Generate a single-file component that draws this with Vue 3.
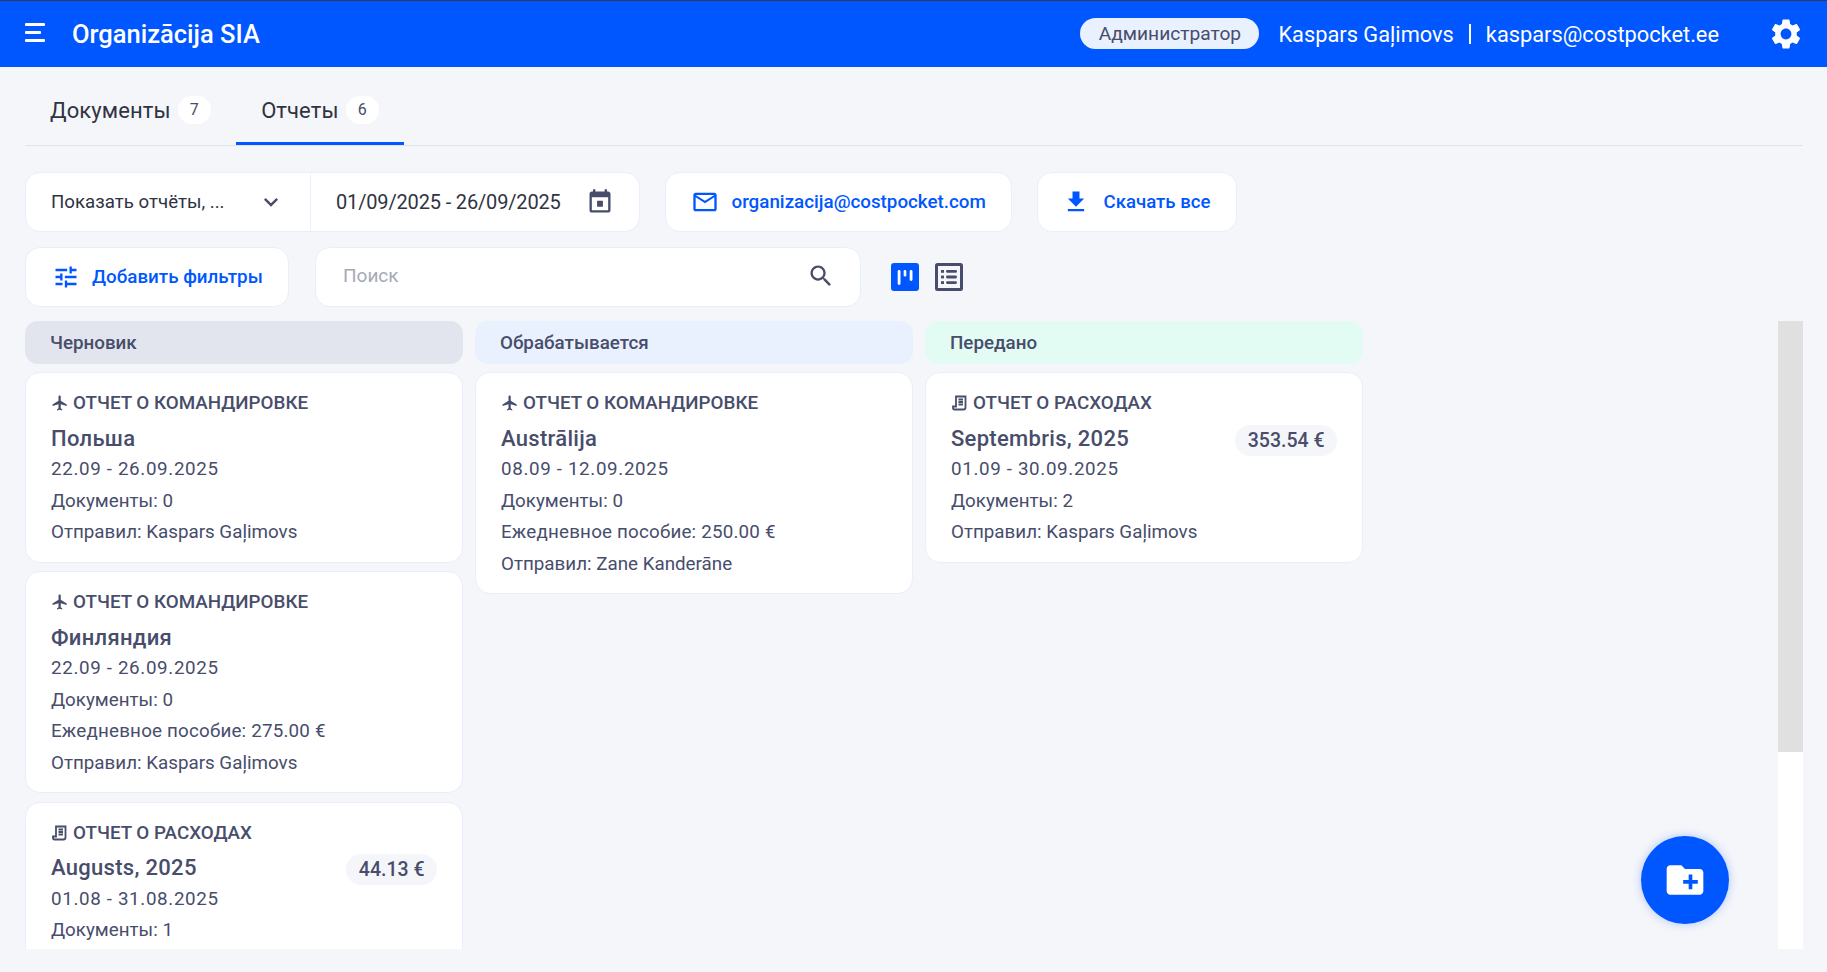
<script setup>
import { ref } from 'vue'

const activeTab = ref('reports')

const tabs = [
  { id: 'docs', label: 'Документы', count: 7 },
  { id: 'reports', label: 'Отчеты', count: 6 }
]

const icons = {
  gear: 'M19.14 12.94c.04-.3.06-.61.06-.94 0-.32-.02-.64-.07-.94l2.03-1.58c.18-.14.23-.41.12-.61l-1.92-3.32c-.12-.22-.37-.29-.59-.22l-2.39.96c-.5-.38-1.03-.7-1.62-.94l-.36-2.54c-.04-.24-.24-.41-.48-.41h-3.84c-.24 0-.43.17-.47.41l-.36 2.54c-.59.24-1.13.57-1.62.94l-2.39-.96c-.22-.08-.47 0-.59.22L2.74 8.87c-.12.21-.08.47.12.61l2.03 1.58c-.05.3-.09.63-.09.94s.02.64.07.94l-2.03 1.58c-.18.14-.23.41-.12.61l1.92 3.32c.12.22.37.29.59.22l2.39-.96c.5.38 1.03.7 1.62.94l.36 2.54c.05.24.24.41.48.41h3.84c.24 0 .44-.17.47-.41l.36-2.54c.59-.24 1.13-.56 1.62-.94l2.39.96c.22.08.47 0 .59-.22l1.92-3.32c.12-.22.07-.47-.12-.61l-2.01-1.58zM12 15.6c-1.98 0-3.6-1.62-3.6-3.6s1.62-3.6 3.6-3.6 3.6 1.62 3.6 3.6-1.62 3.6-3.6 3.6z',
  calendar: 'M19 3h-1V1h-2v2H8V1H6v2H5c-1.11 0-1.99.9-1.99 2L3 19c0 1.1.89 2 2 2h14c1.1 0 2-.9 2-2V5c0-1.1-.9-2-2-2zm0 16H5V8h14v11zM9.5 11h5v5h-5z',
  mail: 'M20 4H4c-1.1 0-1.99.9-1.99 2L2 18c0 1.1.9 2 2 2h16c1.1 0 2-.9 2-2V6c0-1.1-.9-2-2-2zm0 14H4V8l8 5 8-5v10zm-8-7L4 6h16l-8 5z',
  download: 'M19 9h-4V3H9v6H5l7 7 7-7zM5 18v2h14v-2H5z',
  tune: 'M3 17v2h6v-2H3zM3 5v2h10V5H3zm10 16v-2h8v-2h-8v-2h-2v6h2zM7 9v2H3v2h4v2h2V9H7zm14 4v-2H11v2h10zm-6-4h2V7h4V5h-4V3h-2v6z',
  search: 'M15.5 14h-.79l-.28-.27C15.41 12.59 16 11.11 16 9.5 16 5.91 13.09 3 9.5 3S3 5.91 3 9.5 5.91 16 9.5 16c1.61 0 3.09-.59 4.23-1.57l.27.28v.79l5 4.99L20.49 19l-4.99-5zm-6 0C7.01 14 5 11.99 5 9.5S7.01 5 9.5 5 14 7.01 14 9.5 11.99 14 9.5 14z',
  plane: 'M21 16v-2l-8-5V3.5c0-.83-.67-1.5-1.5-1.5S10 2.67 10 3.5V9l-8 5v2l8-2.5V19l-2 1.5V22l3.5-1 3.5 1v-1.5L13 19v-5.5l8 2.5z',
  folder: 'M20 6h-8l-2-2H4c-1.11 0-1.99.89-1.99 2L2 18c0 1.11.89 2 2 2h16c1.11 0 2-.89 2-2V8c0-1.11-.89-2-2-2zm-1 8h-3v3h-2v-3h-3v-2h3V9h2v3h3v2z',
  chevron: 'M7.41 8.59 12 13.17l4.59-4.58L18 10l-6 6-6-6z'
}

const TRIP = 'ОТЧЕТ О КОМАНДИРОВКЕ'
const EXPENSE = 'ОТЧЕТ О РАСХОДАХ'

const columns = [
  {
    id: 'draft',
    title: 'Черновик',
    cards: [
      { type: 'trip', label: TRIP, title: 'Польша', dates: '22.09 - 26.09.2025', lines: ['Документы: 0', 'Отправил: Kaspars Gaļimovs'] },
      { type: 'trip', label: TRIP, title: 'Финляндия', dates: '22.09 - 26.09.2025', lines: ['Документы: 0', 'Ежедневное пособие: 275.00 €', 'Отправил: Kaspars Gaļimovs'] },
      { type: 'expense', label: EXPENSE, title: 'Augusts, 2025', sum: '44.13 €', dates: '01.08 - 31.08.2025', lines: ['Документы: 1', 'Отправил: Kaspars Gaļimovs'] }
    ]
  },
  {
    id: 'processing',
    title: 'Обрабатывается',
    cards: [
      { type: 'trip', label: TRIP, title: 'Austrālija', dates: '08.09 - 12.09.2025', lines: ['Документы: 0', 'Ежедневное пособие: 250.00 €', 'Отправил: Zane Kanderāne'] }
    ]
  },
  {
    id: 'sent',
    title: 'Передано',
    cards: [
      { type: 'expense', label: EXPENSE, title: 'Septembris, 2025', sum: '353.54 €', dates: '01.09 - 30.09.2025', lines: ['Документы: 2', 'Отправил: Kaspars Gaļimovs'] }
    ]
  }
]
</script>

<template>
  <div class="page">
    <header class="topbar">
      <button class="burger" aria-label="Меню">
        <svg width="20" height="19" viewBox="0 0 20 19">
          <rect x="0" y="0" width="20" height="3" rx="1" />
          <rect x="0" y="8" width="16" height="3" rx="1" />
          <rect x="0" y="16" width="20" height="3" rx="1" />
        </svg>
      </button>
      <div class="org">Organizācija SIA</div>
      <span class="role">Администратор</span>
      <span class="user">Kaspars Gaļimovs</span>
      <span class="sep"></span>
      <span class="user">kaspars@costpocket.ee</span>
      <svg class="gear" width="36" height="36" viewBox="0 0 24 24"><path :d="icons.gear" /></svg>
    </header>

    <main class="content">
      <nav class="tabs">
        <div
          v-for="tab in tabs"
          :key="tab.id"
          class="tab"
          :class="{ active: activeTab === tab.id }"
          @click="activeTab = tab.id"
        >
          <span>{{ tab.label }}</span>
          <span class="count">{{ tab.count }}</span>
        </div>
      </nav>

      <div class="toolbar">
        <div class="box range">
          <div class="select">
            <span>Показать отчёты, ...</span>
            <svg width="28" height="28" viewBox="0 0 24 24"><path :d="icons.chevron" /></svg>
          </div>
          <div class="dates">
            <span>01/09/2025 - 26/09/2025</span>
            <svg width="28" height="28" viewBox="0 0 24 24"><path :d="icons.calendar" /></svg>
          </div>
        </div>
        <a class="box link mail">
          <svg width="28" height="28" viewBox="0 0 24 24"><path :d="icons.mail" /></svg>
          <span>organizacija@costpocket.com</span>
        </a>
        <a class="box link down">
          <svg width="28" height="28" viewBox="0 0 24 24"><path :d="icons.download" /></svg>
          <span>Скачать все</span>
        </a>
      </div>

      <div class="toolbar second">
        <a class="box link filters">
          <svg width="28" height="28" viewBox="0 0 24 24"><path :d="icons.tune" /></svg>
          <span>Добавить фильтры</span>
        </a>
        <div class="box search">
          <span class="placeholder">Поиск</span>
          <svg width="28" height="28" viewBox="0 0 24 24"><path :d="icons.search" /></svg>
        </div>
        <div class="views">
          <svg class="view" viewBox="0 0 28 28">
            <rect width="28" height="28" rx="3" fill="#0057ff" />
            <rect x="6.7" y="7" width="2.8" height="15" rx="1.4" fill="#fff" />
            <rect x="12.7" y="7" width="2.6" height="6.5" rx="1.3" fill="#fff" />
            <rect x="18.7" y="7" width="2.8" height="11" rx="1.4" fill="#fff" />
          </svg>
          <svg class="view" viewBox="0 0 28 28">
            <rect x="1.5" y="1.5" width="25" height="25" rx="1" fill="none" stroke="#474d6b" stroke-width="3" />
            <rect x="6" y="7" width="3" height="2.8" fill="#474d6b" />
            <rect x="11" y="7" width="11" height="2.8" rx="1.4" fill="#474d6b" />
            <rect x="6" y="12.6" width="3" height="2.8" fill="#474d6b" />
            <rect x="11" y="12.6" width="11" height="2.8" rx="1.4" fill="#474d6b" />
            <rect x="6" y="18.2" width="3" height="2.8" fill="#474d6b" />
            <rect x="11" y="18.2" width="11" height="2.8" rx="1.4" fill="#474d6b" />
          </svg>
        </div>
      </div>

      <section class="board">
        <div class="columns">
          <div v-for="col in columns" :key="col.id" class="column">
            <div class="col-head" :class="col.id">{{ col.title }}</div>
            <article v-for="card in col.cards" :key="card.title" class="card">
              <div class="card-type">
                <svg v-if="card.type === 'trip'" width="18" height="18" viewBox="0 0 24 24">
                  <path :d="icons.plane" />
                </svg>
                <svg v-else class="receipt" width="18" height="18" viewBox="0 0 18 18">
                  <path d="M5 2.5h9.5v11c0 1.2-.8 2-2 2H3.5c-1 0-1.5-.7-1.5-1.6V12.5h3z" />
                  <path d="M7.5 5.5h4.5M7.5 8h4.5M7.5 10.5h4.5" />
                </svg>
                <span>{{ card.label }}</span>
              </div>
              <div class="card-title">
                <span>{{ card.title }}</span>
                <span v-if="card.sum" class="sum">{{ card.sum }}</span>
              </div>
              <div class="card-line card-dates">{{ card.dates }}</div>
              <div
                v-for="line in card.lines"
                :key="line"
                class="card-line"
                :class="{ money: line.includes('€') }"
              >{{ line }}</div>
            </article>
          </div>
        </div>
        <div class="scroll-track"><div class="scroll-thumb"></div></div>
      </section>
    </main>

    <button class="fab" aria-label="Новый отчет">
      <svg width="44" height="44" viewBox="0 0 24 24"><path :d="icons.folder" /></svg>
    </button>
  </div>
</template>

<style scoped>
.page {
  height: 972px;
  overflow: hidden;
  position: relative;
  background: #f5f6fa;
  color: #474d6b;
  font-family: Roboto, "Liberation Sans", sans-serif;
}

.topbar {
  height: 66px;
  border-top: 1px solid #2f3a55;
  background: #0057ff;
  color: #fff;
  display: flex;
  align-items: center;
  padding: 0 23px 0 25px;
}

.burger {
  background: none;
  border: none;
  padding: 0;
  width: 47px;
  margin-top: -3px;
  display: flex;
  fill: #fff;
}

.org {
  font-size: 25.5px;
  font-weight: 500;
  margin-right: auto;
}

.role {
  background: #e9f0fe;
  color: #474d6b;
  font-size: 19.2px;
  height: 31px;
  width: 179px;
  display: flex;
  align-items: center;
  justify-content: center;
  border-radius: 16px;
  margin-right: 19px;
  margin-top: -1px;
}

.user {
  font-size: 21.8px;
}

.sep {
  width: 2px;
  height: 20px;
  background: #fff;
  margin: 0 15px;
}

.gear {
  fill: #fff;
  margin-left: 49px;
}

.content {
  padding: 0 24px 0 25px;
}

.tabs {
  height: 79px;
  padding-top: 27px;
  box-sizing: border-box;
  border-bottom: 1px solid #e2e4ea;
  display: flex;
  margin-bottom: 26px;
}

.tab {
  display: flex;
  gap: 7px;
  align-items: flex-start;
  height: 51px;
  padding: 3px 25px 0;
  font-size: 22px;
  letter-spacing: 0.1px;
  color: #2f3342;
  cursor: pointer;
  box-sizing: border-box;
  line-height: 28px;
}

.tab.active {
  border-bottom: 3px solid #0057ff;
}

.count {
  background: #fff;
  border-radius: 14px;
  width: 33.5px;
  height: 28px;
  margin-top: -1px;
  text-align: center;
  font-size: 16px;
  color: #474d6b;
}

.toolbar {
  display: flex;
  gap: 24.5px;
  height: 60px;
}

.toolbar.second {
  margin-top: 15px;
  gap: 26px;
  align-items: center;
}

.box {
  background: #fff;
  border: 1px solid #e8eefb;
  border-radius: 15px;
  height: 60px;
  box-sizing: border-box;
  display: flex;
  align-items: center;
}

.range {
  width: 615px;
  font-size: 20px;
  color: #2f3342;
}

.range svg {
  fill: #474d6b;
}

.select {
  width: 285px;
  height: 100%;
  box-sizing: border-box;
  padding: 0 25px 0 25px;
  display: flex;
  align-items: center;
  justify-content: space-between;
  border-right: 1px solid #e9f0fe;
  font-size: 18.7px;
}

.dates {
  flex: 1;
  padding: 0 25px 0 25px;
  display: flex;
  align-items: center;
  justify-content: space-between;
  letter-spacing: -0.16px;
}

.link {
  color: #0057ff;
  fill: #0057ff;
  font-size: 18.8px;
  font-weight: 500;
  gap: 13px;
}

.mail {
  width: 347.5px;
  padding-left: 25px;
}

.down {
  width: 200px;
  padding-left: 24px;
  gap: 14px;
  font-size: 18.6px;
}

.filters {
  width: 264px;
  padding-left: 26px;
  gap: 12px;
}

.search {
  width: 546px;
  padding: 0 25px 3px 27px;
  justify-content: space-between;
  fill: #474d6b;
}

.placeholder {
  font-size: 19px;
  color: #a5a9b8;
}

.views {
  display: flex;
  gap: 16px;
  margin-left: 4px;
}

.view {
  width: 28px;
  height: 28px;
}

.board {
  margin-top: 14px;
  height: 628px;
  display: flex;
}

.columns {
  flex: 1;
  overflow: hidden;
  display: flex;
  gap: 12px;
  align-items: flex-start;
}

.scroll-track {
  width: 25px;
  background: #fff;
}

.scroll-thumb {
  height: 431px;
  background: #e0e0e0;
}

.column {
  width: 438px;
  display: flex;
  flex-direction: column;
  gap: 8.5px;
}

.col-head {
  height: 43px;
  border-radius: 13px;
  padding-left: 25px;
  display: flex;
  align-items: center;
  font-size: 18.8px;
  font-weight: 500;
  margin-bottom: -0.5px;
}

.col-head.draft {
  background: #e2e5ed;
}

.col-head.processing {
  background: #e9f0fe;
}

.col-head.sent {
  background: #e2fcf3;
}

.card {
  background: #fff;
  border: 1px solid #e8eefb;
  border-radius: 15px;
  padding: 16px 25px 13px 25px;
  flex: none;
}

.card-type {
  display: flex;
  align-items: center;
  gap: 4px;
  height: 28px;
  font-size: 18.8px;
  font-weight: 500;
}

.card-type svg {
  fill: #474d6b;
  flex: none;
}

.receipt path {
  fill: none;
  stroke: #474d6b;
  stroke-width: 1.8;
}

.card-title {
  display: flex;
  justify-content: space-between;
  align-items: center;
  height: 31.5px;
  margin-top: 5.5px;
  font-size: 22px;
  font-weight: 500;
  letter-spacing: 0.3px;
}

.sum {
  background: #f5f6fa;
  border-radius: 16px;
  height: 31px;
  padding: 0 12.5px;
  display: flex;
  align-items: center;
  font-size: 19.5px;
  letter-spacing: 0;
  margin-top: 4px;
}

.card-line {
  font-size: 18.8px;
  line-height: 31.5px;
}

.card-dates {
  letter-spacing: 0.65px;
}

.money {
  letter-spacing: 0.2px;
}

.fab {
  position: absolute;
  left: 1641px;
  top: 836px;
  width: 88px;
  height: 88px;
  padding: 0;
  border: none;
  border-radius: 50%;
  background: #0057ff;
  box-shadow: 0 0 10px rgba(0, 87, 255, 0.3);
  fill: #fff;
  display: flex;
  align-items: center;
  justify-content: center;
}
</style>

<style>
body {
  background: #f5f6fa;
}
</style>
